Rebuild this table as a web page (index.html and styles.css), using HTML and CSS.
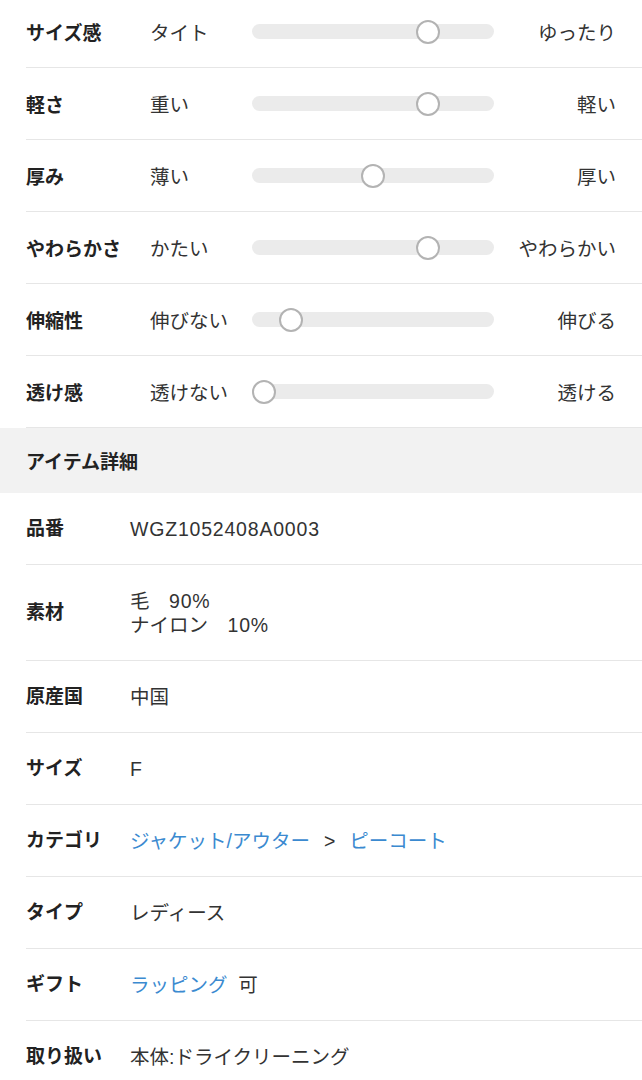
FILE: index.html
```html
<!DOCTYPE html>
<html lang="ja">
<head>
<meta charset="utf-8">
<link rel="stylesheet" href="styles.css">
</head>
<body>
<section class="sliders">
  <div class="srow">
    <div class="slabel">サイズ感</div>
    <div class="sleft">タイト</div>
    <div class="track"><span class="thumb" style="--p:0.75"></span></div>
    <div class="sright">ゆったり</div>
  </div>
  <div class="srow">
    <div class="slabel">軽さ</div>
    <div class="sleft">重い</div>
    <div class="track"><span class="thumb" style="--p:0.75"></span></div>
    <div class="sright">軽い</div>
  </div>
  <div class="srow">
    <div class="slabel">厚み</div>
    <div class="sleft">薄い</div>
    <div class="track"><span class="thumb" style="--p:0.5"></span></div>
    <div class="sright">厚い</div>
  </div>
  <div class="srow">
    <div class="slabel">やわらかさ</div>
    <div class="sleft">かたい</div>
    <div class="track"><span class="thumb" style="--p:0.75"></span></div>
    <div class="sright">やわらかい</div>
  </div>
  <div class="srow">
    <div class="slabel">伸縮性</div>
    <div class="sleft">伸びない</div>
    <div class="track"><span class="thumb" style="--p:0.125"></span></div>
    <div class="sright">伸びる</div>
  </div>
  <div class="srow">
    <div class="slabel">透け感</div>
    <div class="sleft">透けない</div>
    <div class="track"><span class="thumb" style="--p:0"></span></div>
    <div class="sright">透ける</div>
  </div>
</section>
<h2 class="section-head">アイテム詳細</h2>
<section class="details">
  <div class="drow"><div class="dlabel">品番</div><div class="dval"><span class="en">WGZ1052408A0003</span></div></div>
  <div class="drow"><div class="dlabel">素材</div><div class="dval">毛　<span class="en">90%</span><br>ナイロン　<span class="en">10%</span></div></div>
  <div class="drow"><div class="dlabel">原産国</div><div class="dval">中国</div></div>
  <div class="drow"><div class="dlabel">サイズ</div><div class="dval"><span class="en">F</span></div></div>
  <div class="drow"><div class="dlabel">カテゴリ</div><div class="dval"><a class="link">ジャケット/アウター</a><span class="sep">&gt;</span><a class="link">ピーコート</a></div></div>
  <div class="drow"><div class="dlabel">タイプ</div><div class="dval">レディース</div></div>
  <div class="drow"><div class="dlabel">ギフト</div><div class="dval"><a class="link">ラッピング</a>&nbsp; 可</div></div>
  <div class="drow last"><div class="dlabel">取り扱い</div><div class="dval">本体:ドライクリーニング</div></div>
</section>
</body>
</html>
```
FILE: styles.css
```css
* { box-sizing: border-box; }
html, body { margin: 0; padding: 0; background: #fff; }
body {
  font-family: "Liberation Sans", "Noto Sans CJK JP", sans-serif;
  font-size: 19.5px;
  color: #222;
  overflow: hidden;
}
.sliders { margin-top: -4px; }
.srow {
  display: flex;
  align-items: center;
  height: 72px;
  margin-left: 26px;
  padding-right: 26px;
  border-bottom: 1px solid #e6e6e6;
}
.slabel { width: 124px; flex: none; font-size: 19px; font-weight: 700; }
.sleft { width: 102px; flex: none; color: #333; }
.track {
  position: relative;
  width: 242px;
  height: 15px;
  border-radius: 8px;
  background: #ebebeb;
  flex: none;
}
.thumb {
  position: absolute;
  top: 50%;
  left: calc(var(--p) * (100% - 24px));
  width: 24px;
  height: 24px;
  margin-top: -12px;
  border-radius: 50%;
  background: #fff;
  border: 2px solid #b3b3b3;
}
.sright { flex: 1; text-align: right; color: #333; }
.section-head {
  margin: 0;
  background: #f2f2f2;
  height: 65px;
  display: flex;
  align-items: center;
  padding-left: 26px;
  font-size: 19px;
  font-weight: 700;
  color: #222;
}
.drow {
  display: flex;
  align-items: center;
  padding: 24px 26px 23px 0;
  margin-left: 26px;
  border-bottom: 1px solid #e6e6e6;
  line-height: 24px;
}
.drow.last { border-bottom: none; }
.dlabel { width: 104px; flex: none; font-size: 19px; font-weight: 700; }
.dval { color: #333; }
.en { letter-spacing: 0.8px; }
.link { color: #3b8ad0; text-decoration: none; }
.sep { margin: 0 14px; color: #333; }
```
